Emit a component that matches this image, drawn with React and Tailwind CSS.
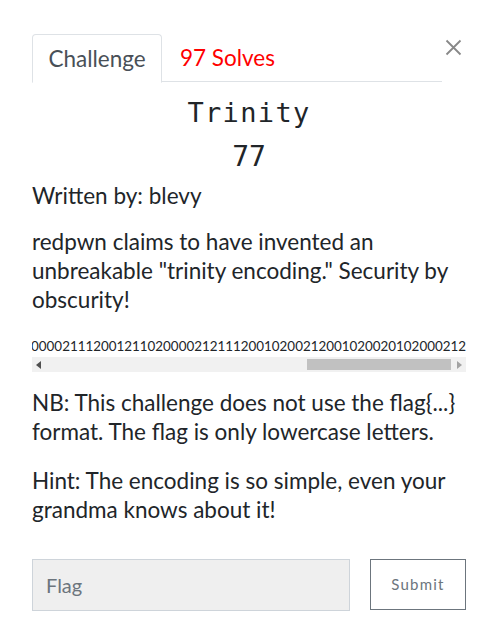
import React from "react";

const CODE =
  "1200102002120010200201020002120021112001211020000212111200102002120010200000021112001211020000212111200102002120010200201020002 12".replace(" ", "");

export default function App() {
  return (
    <div className="w-[498px] h-[636px] bg-white relative overflow-hidden" style={{ fontFamily: "Lato, 'Noto Sans', sans-serif" }}>
      <button className="absolute left-[444px] top-[38px] w-[19px] h-[19px] flex items-center justify-center">
        <svg width="17" height="17" viewBox="0 0 17 17">
          <path d="M1.5 1.5 L15.5 15.5 M15.5 1.5 L1.5 15.5" stroke="#888" strokeWidth="1.8" fill="none" />
        </svg>
      </button>
      <div className="pl-[32px] pr-[32px] pt-[34px]">
        <div className="flex w-[410px] border-b border-[#dee2e6] h-[48px]">
          <div className="w-[130px] h-[49px] border border-[#dee2e6] border-b-white rounded-t-[4px] bg-white flex items-center justify-center text-[22.5px] text-[#495057]">
            Challenge
          </div>
          <div className="h-[48px] flex items-center pl-[18px] text-[22.5px] text-[#ff0000]">97 Solves</div>
        </div>
        <div className="text-center text-[#212529]">
          <div className="mt-[14px] text-[27px] leading-[34px] tracking-[0.05em]" style={{ fontFamily: "'DejaVu Sans Mono', monospace" }}>
            Trinity
          </div>
          <div className="mt-[8px] text-[28px] leading-[38px]" style={{ fontFamily: "'DejaVu Sans Mono', monospace" }}>
            77
          </div>
        </div>
        <div className="text-[22.5px] leading-[29px] text-[#212529] whitespace-nowrap">
          <p className="mt-[5px]">Written by: blevy</p>
          <p className="mt-[17px]">
            redpwn claims to have invented an
            <br />
            unbreakable "trinity encoding." Security by
            <br />
            obscurity!
          </p>
          <div className="mt-[23px] w-[434px]">
            <div className="overflow-hidden flex justify-end text-[13.4px] leading-[18px] whitespace-nowrap">
              <span>{CODE}</span>
            </div>
            <div className="mt-[2px] h-[15px] bg-[#f1f1f1] flex items-center">
              <div className="w-[12px] flex justify-center">
                <svg width="5" height="8" viewBox="0 0 5 8"><path d="M5 0 L0 4 L5 8 Z" fill="#505050" /></svg>
              </div>
              <div className="flex-1 h-[11px] flex justify-end pr-[2px]">
                <div className="w-[144px] h-full bg-[#c1c1c1]" />
              </div>
              <div className="w-[13px] flex justify-center">
                <svg width="5" height="8" viewBox="0 0 5 8"><path d="M0 0 L5 4 L0 8 Z" fill="#a3a3a3" /></svg>
              </div>
            </div>
          </div>
          <p className="mt-[16px]">
            NB: This challenge does not use the flag{"{...}"}
            <br />
            format. The flag is only lowercase letters.
          </p>
          <p className="mt-[20px]">
            Hint: The encoding is so simple, even your
            <br />
            grandma knows about it!
          </p>
        </div>
        <div className="mt-[35px] flex items-start">
          <input
            className="w-[318px] h-[52px] bg-[#efefef] border border-[#ced4da] px-[13px] text-[20px] text-[#495057] placeholder:text-[#6c757d] outline-none"
            placeholder="Flag"
          />
          <button className="ml-[20px] w-[96px] h-[51px] border-[1.5px] border-[#6c757d] text-[15px] tracking-[0.08em] text-[#6c757d]">
            Submit
          </button>
        </div>
      </div>
    </div>
  );
}
